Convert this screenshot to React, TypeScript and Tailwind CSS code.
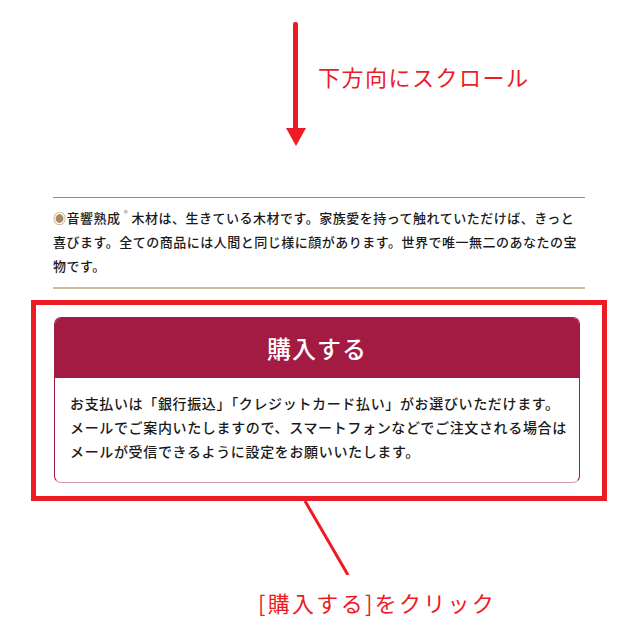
export default function App() {
  return (
    <div className="w-[640px] h-[640px] bg-white overflow-hidden font-['Noto_Sans_CJK_JP',sans-serif]">
      {/* Scroll hint */}
      <div className="h-[197px] flex items-start pl-[286px] pt-[22px]">
        <svg width="20" height="124" viewBox="0 0 20 124" className="shrink-0">
          <rect x="7" y="0" width="5" height="108" rx="2" fill="#ec1c24" />
          <polygon points="0,106 20,106 10,124" fill="#ec1c24" />
        </svg>
        <p className="ml-[12px] mt-[38px] text-[22px] leading-[33px] tracking-[1.5px] text-[#ec1c24]">
          下方向にスクロール
        </p>
      </div>

      {/* Product note */}
      <div className="ml-[53px] w-[532px] border-t border-[#a8895a] border-b-2 border-b-[#cbbd9f] pt-[8px] pb-[9px]">
        <p className="text-[13px] leading-[24px] tracking-[0.5px] font-medium text-[#1a1a1a]">
          <span className="text-[#a8895a]">◉</span>音響熟成
          <span className="inline-block w-[11px] text-center align-top text-[8px] leading-[16px] text-[#888]">®</span>
          木材は、生きている木材です。家族愛を持って触れていただけば、きっと喜びます。全ての商品には人間と同じ様に顔があります。世界で唯一無二のあなたの宝物です。
        </p>
      </div>

      {/* Purchase card, highlighted */}
      <div className="ml-[31px] mt-[11px] w-[576px] h-[201px] border-[5px] border-[#ec1c24] pt-[12px] pl-[18px]">
        <div className="w-[526px] h-[166px] rounded-[7px] overflow-hidden border border-[#a31a42] border-b-[#d89aab] flex flex-col">
          <div className="h-[60px] bg-[#a31a42] flex items-center justify-center">
            <span className="text-white text-[24px] tracking-[1px] font-medium">購入する</span>
          </div>
          <p className="pl-[15px] pt-[13px] text-[14px] leading-[24px] tracking-[0.65px] font-medium text-[#1a1a1a]">
            お支払いは「銀行振込」「クレジットカード払い」がお選びいただけます。
            <br />
            メールでご案内いたしますので、スマートフォンなどでご注文される場合は
            <br />
            メールが受信できるように設定をお願いいたします。
          </p>
        </div>
      </div>

      {/* Callout */}
      <svg width="640" height="74" viewBox="0 0 640 74" className="block">
        <line x1="305" y1="0" x2="348" y2="74" stroke="#ec1c24" strokeWidth="3" />
      </svg>
      <p className="ml-[258px] mt-[11px] text-[22px] leading-[33px] tracking-[2.3px] text-[#ec1c24]">
        [購入する]をクリック
      </p>
    </div>
  );
}
